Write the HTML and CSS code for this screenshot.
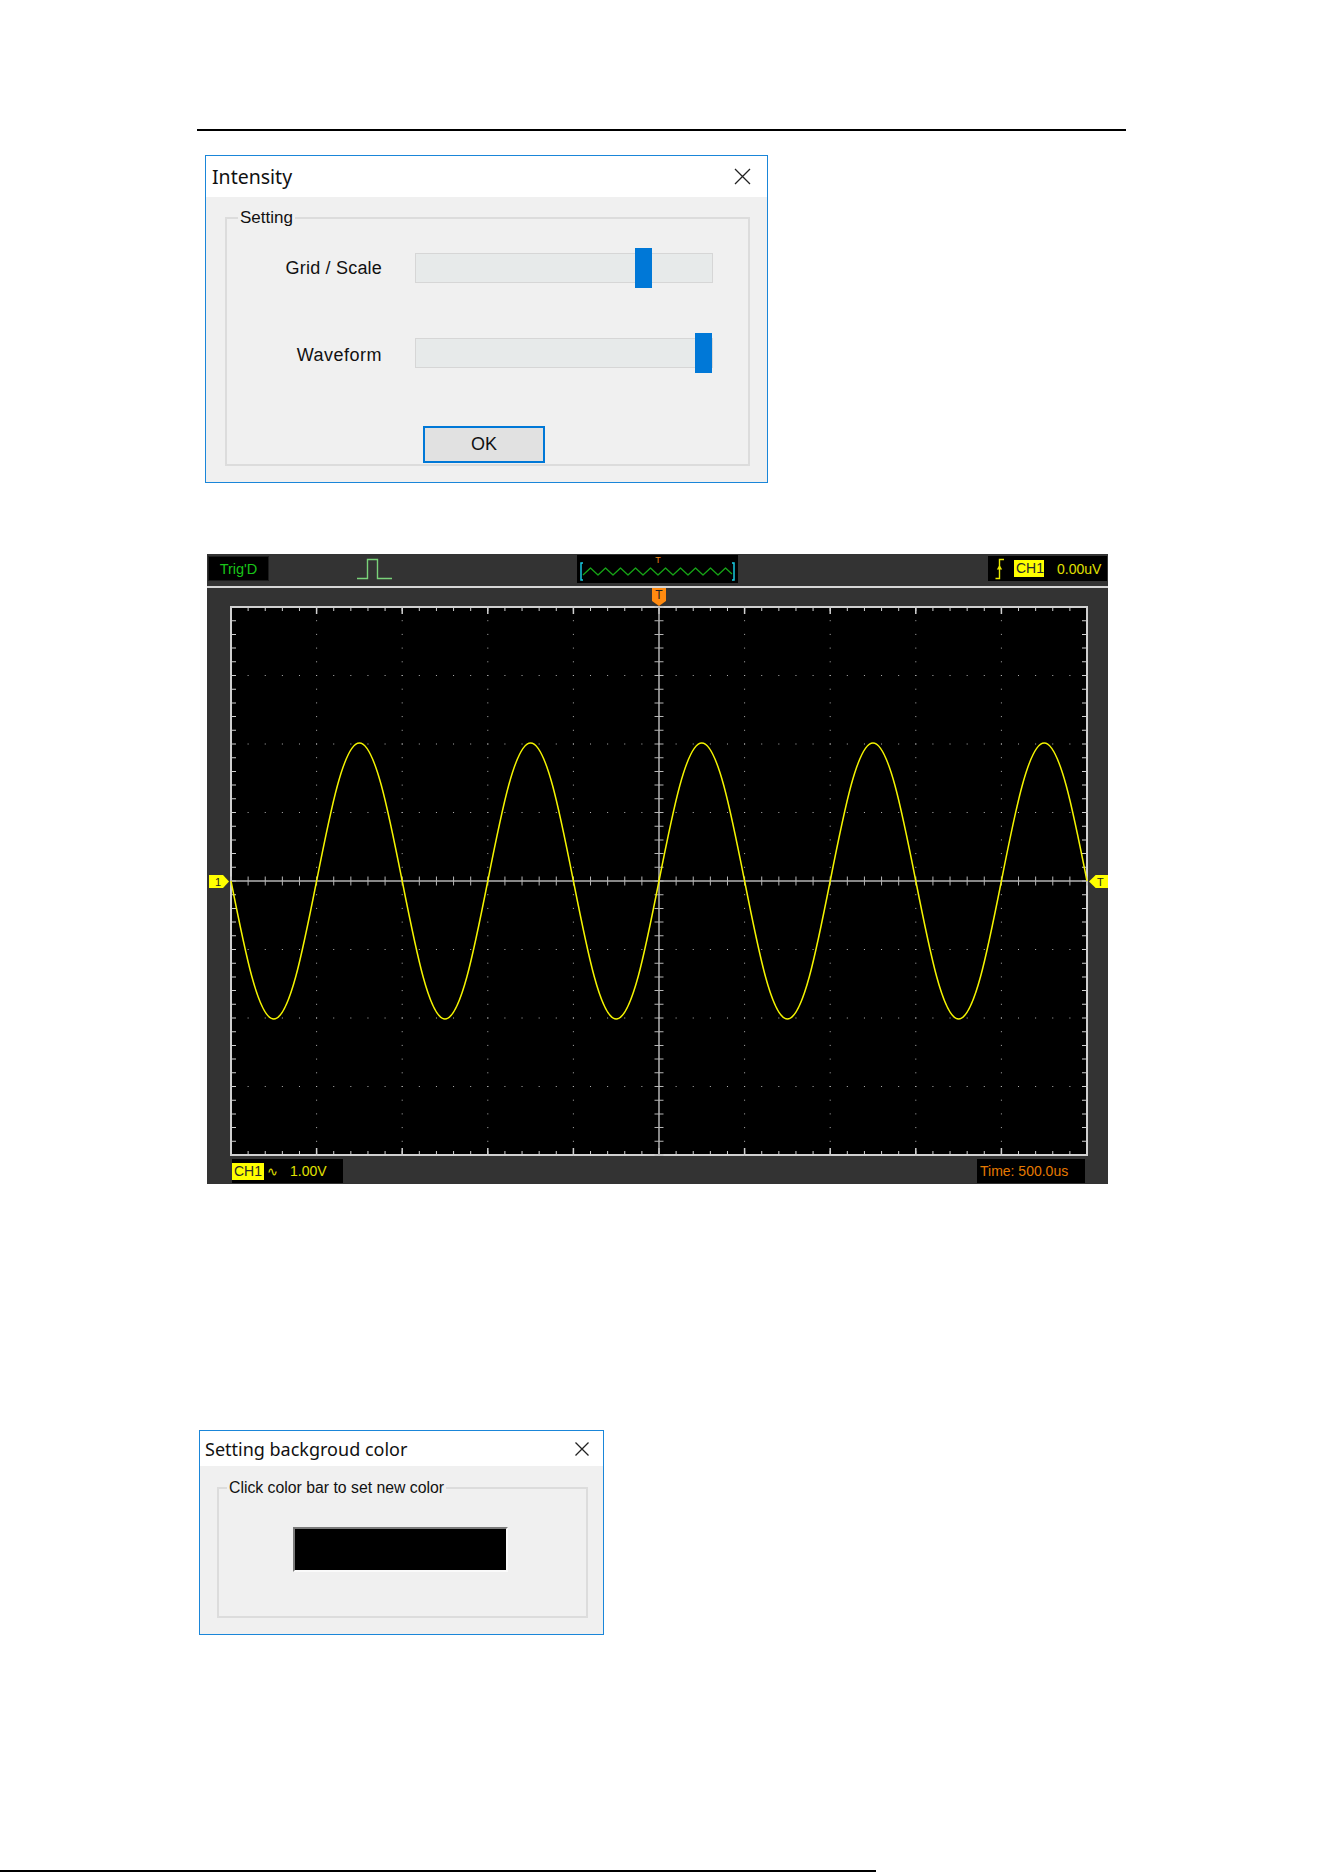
FILE: index.html
```html
<!DOCTYPE html>
<html lang="en">
<head>
<meta charset="utf-8">
<title>Display settings</title>
<link rel="stylesheet" href="styles.css">
</head>
<body>
<div class="page">
  <div class="rule rule-top"></div>

  <section class="dialog dialog-intensity">
    <div class="titlebar">
      <span class="title">Intensity</span>
      <svg class="close" width="17" height="17" viewBox="0 0 17 17"><path d="M1 1L16 16M16 1L1 16"/></svg>
    </div>
    <div class="dialog-body">
      <div class="group">
        <div class="legend">Setting</div>
        <div class="sliders">
          <span class="slider-label">Grid / Scale</span>
          <div class="track"><span class="thumb" style="left:219px"></span></div>
          <span class="slider-label label-low">Waveform</span>
          <div class="track"><span class="thumb" style="left:279px"></span></div>
        </div>
        <div class="actions"><button class="btn-ok" type="button">OK</button></div>
      </div>
    </div>
  </section>

  <section class="scope">
    <div class="scope-top">
      <div class="status">Trig'D</div>
      <svg class="pulse" width="36" height="22" viewBox="0 0 36 22">
        <path d="M0 20.5H10.5V1.5H20.5V20.5H35"/>
      </svg>
      <div class="memory">
        <svg width="161" height="28" viewBox="0 0 161 28">
          <path class="bracket" d="M6 8H4V25H6M155 8H157V25H155"/>
          <polyline class="zig" points="6,20 13.5,13 21,20 28.5,13 36,20 43.5,13 51,20 58.5,13 66,20 73.5,13 81,20 88.5,13 96,20 103.5,13 111,20 118.5,13 126,20 133.5,13 141,20 148.5,13 155,19"/>
          <text class="mem-t" x="81" y="8">T</text>
        </svg>
      </div>
      <div class="trigger">
        <svg class="edge" width="10" height="22" viewBox="0 0 10 22">
          <path d="M0.5 20.5H4.5V1.5H9"/>
          <path class="arrow" d="M1.8 11.5L4.5 7L7.2 11.5Z"/>
        </svg>
        <span class="ch-tag">CH1</span>
        <span class="trig-level">0.00uV</span>
      </div>
    </div>
    <div class="scope-sep"></div>
    <div class="screen">
      <svg class="graticule" width="858" height="550" viewBox="0 0 858 550">
        <rect x="1" y="1" width="856" height="548" fill="#000" stroke="#d0d0d0" stroke-width="2"/>
        <g class="dots-v">
          <line x1="86.6" y1="0.5" x2="86.6" y2="550"/>
          <line x1="172.2" y1="0.5" x2="172.2" y2="550"/>
          <line x1="257.8" y1="0.5" x2="257.8" y2="550"/>
          <line x1="343.4" y1="0.5" x2="343.4" y2="550"/>
          <line x1="514.6" y1="0.5" x2="514.6" y2="550"/>
          <line x1="600.2" y1="0.5" x2="600.2" y2="550"/>
          <line x1="685.8" y1="0.5" x2="685.8" y2="550"/>
          <line x1="771.4" y1="0.5" x2="771.4" y2="550"/>
        </g>
        <g class="dots-h">
          <line x1="0.5" y1="69.5" x2="858" y2="69.5"/>
          <line x1="0.5" y1="138" x2="858" y2="138"/>
          <line x1="0.5" y1="206.5" x2="858" y2="206.5"/>
          <line x1="0.5" y1="343.5" x2="858" y2="343.5"/>
          <line x1="0.5" y1="412" x2="858" y2="412"/>
          <line x1="0.5" y1="480.5" x2="858" y2="480.5"/>
        </g>
        <g class="ticks">
          <line class="tick-h" x1="0.5" y1="3" x2="858" y2="3" stroke-width="4"/>
          <line class="tick-h" x1="0.5" y1="547" x2="858" y2="547" stroke-width="4"/>
          <line class="tick-major" x1="0.25" y1="4.5" x2="858" y2="4.5" stroke-width="7"/>
          <line class="tick-major" x1="0.25" y1="545.5" x2="858" y2="545.5" stroke-width="7"/>
          <line class="tick-v" x1="3.5" y1="0.5" x2="3.5" y2="550" stroke-width="5"/>
          <line class="tick-v" x1="854.5" y1="0.5" x2="854.5" y2="550" stroke-width="5"/>
        </g>
        <g class="axis">
          <line x1="1" y1="275" x2="857" y2="275"/>
          <line x1="429" y1="1" x2="429" y2="549"/>
          <line class="tick-h" x1="0.5" y1="275" x2="858" y2="275" stroke-width="9"/>
          <line class="tick-v" x1="429" y1="0.5" x2="429" y2="550" stroke-width="9"/>
        </g>
        <path class="trace" d="M1 275c13.96 70.7 27.31 138 42.8 138s28.84 -67.3 42.8 -138s27.31 -138 42.8 -138s28.84 67.3 42.8 138s27.31 138 42.8 138s28.84 -67.3 42.8 -138s27.31 -138 42.8 -138s28.84 67.3 42.8 138s27.31 138 42.8 138s28.84 -67.3 42.8 -138s27.31 -138 42.8 -138s28.84 67.3 42.8 138s27.31 138 42.8 138s28.84 -67.3 42.8 -138s27.31 -138 42.8 -138s28.84 67.3 42.8 138s27.31 138 42.8 138s28.84 -67.3 42.8 -138s27.31 -138 42.8 -138s28.84 67.3 42.8 138"/>
      </svg>
    </div>
    <div class="scope-bottom">
      <div class="readout ch-readout"><span class="ch-tag">CH1</span><span class="coupling">∿</span><span class="volts">1.00V</span></div>
      <div class="readout time-readout">Time: 500.0us</div>
    </div>
    <span class="marker marker-t">T</span>
    <span class="marker marker-ch">1</span>
    <span class="marker marker-trig">T</span>
  </section>

  <section class="dialog dialog-bg">
    <div class="titlebar">
      <span class="title">Setting backgroud color</span>
      <svg class="close" width="14" height="14" viewBox="0 0 14 14"><path d="M0.5 0.5L13.5 13.5M13.5 0.5L0.5 13.5"/></svg>
    </div>
    <div class="dialog-body">
      <div class="group">
        <div class="legend">Click color bar to set new color</div>
        <div class="color-bar"></div>
      </div>
    </div>
  </section>

  <div class="rule rule-bottom"></div>
</div>
</body>
</html>
```

FILE: styles.css
```css
* { box-sizing: border-box; }

html, body {
  margin: 0;
  padding: 0;
  background: #fff;
}

body {
  height: 1872px;
  overflow: hidden;
  font-family: "Liberation Sans", Arial, sans-serif;
  color: #000;
}

.page {
  display: flex;
  flex-direction: column;
  align-items: flex-start;
}

/* page rules */
.rule { background: #000; height: 2px; }
.rule-top { margin: 129px 0 0 197px; width: 929px; }
.rule-bottom { margin: 235px 0 0 0; width: 876px; }

/* Windows-style dialogs */
.dialog {
  display: flex;
  flex-direction: column;
  background: #f0f0f0;
  border: 1px solid #1a86d9;
}

.titlebar {
  display: flex;
  align-items: center;
  justify-content: space-between;
  background: #fff;
}

.title {
  font-family: "Noto Sans", "Open Sans", sans-serif;
  color: #111;
}

.close path {
  fill: none;
  stroke: #222;
  stroke-width: 1.3;
}

.dialog-body {
  flex: 1;
  display: flex;
}

.group {
  flex: 1;
  border: 2px solid #dcdcdc;
}

.legend {
  width: fit-content;
  padding: 0 2px;
  background: #f0f0f0;
  color: #111;
}

/* Intensity dialog */
.dialog-intensity {
  margin: 24px 0 0 205px;
  width: 563px;
  height: 328px;
}
.dialog-intensity .titlebar { height: 41px; padding: 0 16px 0 6px; }
.dialog-intensity .title { font-size: 19.5px; }
.dialog-intensity .dialog-body { padding: 20px 17px 16px 19px; }
.dialog-intensity .legend {
  margin: -11px 0 0 11px;
  font-size: 17px;
  line-height: 20px;
}

.sliders {
  display: grid;
  grid-template-columns: 155px 298px;
  grid-auto-rows: 40px;
  column-gap: 33px;
  row-gap: 45px;
  align-items: center;
  margin-top: 20px;
}

.slider-label {
  text-align: right;
  font-size: 18px;
  letter-spacing: 0.2px;
  color: #111;
}
.label-low { padding-top: 5px; letter-spacing: 0.5px; }

.track {
  position: relative;
  height: 30px;
  background: #e7eaea;
  border: 1px solid #d6d6d6;
}

.thumb {
  position: absolute;
  top: -6px;
  width: 17px;
  height: 40px;
  background: #0078d7;
}

.actions { margin: 53px 0 0 196px; }

.btn-ok {
  display: block;
  width: 122px;
  height: 37px;
  margin: 0;
  padding: 0;
  background: #e1e1e1;
  border: 2px solid #0078d7;
  font-family: "Liberation Sans", Arial, sans-serif;
  font-size: 18px;
  color: #111;
}

/* oscilloscope display */
.scope {
  position: relative;
  margin: 71px 0 0 207px;
  width: 901px;
  height: 630px;
  background: #333;
  display: flex;
  flex-direction: column;
  font-family: "Liberation Sans", Arial, sans-serif;
  font-size: 14px;
}

.scope-top {
  display: flex;
  align-items: flex-start;
  height: 32px;
  padding-top: 2px;
}

.status {
  margin-left: 1px;
  width: 61px;
  height: 25px;
  background: #000;
  border: 1px solid #1c1c1c;
  color: #19c419;
  font-size: 14.5px;
  display: flex;
  align-items: center;
  justify-content: center;
}

.pulse { margin: 2px 0 0 88px; }
.pulse path {
  fill: none;
  stroke: #7ad27a;
  stroke-width: 1.4;
}

.memory {
  margin: -1px 0 0 184px;
  width: 161px;
  height: 28px;
  background: #000;
}
.memory svg { display: block; }
.bracket { fill: none; stroke: #18c8e0; stroke-width: 1.5; }
.zig { fill: none; stroke: #16a316; stroke-width: 1.3; stroke-linejoin: round; }
.mem-t {
  fill: #f08a1a;
  font-family: "Liberation Sans", Arial, sans-serif;
  font-size: 9px;
  text-anchor: middle;
}

.trigger {
  margin-left: auto;
  margin-right: 1px;
  width: 119px;
  height: 25px;
  background: #000;
  display: flex;
  align-items: center;
  padding-left: 7px;
}
.edge path { fill: none; stroke: #e8e800; stroke-width: 1.4; }
.edge .arrow { fill: #e8e800; stroke: none; }

.ch-tag {
  background: #ffff00;
  color: #2a2a2a;
  height: 17px;
  line-height: 17px;
  padding: 0 2px;
}
.trigger .ch-tag { margin-left: 9px; width: 30px; }
.trig-level { margin-left: 13px; color: #e0e000; }

.scope-sep {
  height: 2px;
  background: #d6d6d6;
}

.screen {
  height: 568px;
  padding: 18px 0 0 23px;
}
.graticule { display: block; }

.dots-v line { stroke: #b0b0b0; stroke-width: 1; stroke-dasharray: 1 12.7; }
.dots-h line { stroke: #b0b0b0; stroke-width: 1; stroke-dasharray: 1 16.12; }
.ticks line { stroke: #d0d0d0; }
.tick-h { stroke-dasharray: 1 16.12; }
.tick-v { stroke-dasharray: 1 12.7; }
.tick-major { stroke-dasharray: 1.5 84.1; }
.axis line { stroke: #b4b4b4; stroke-width: 1.5; }
.axis .tick-h, .axis .tick-v { stroke-width: 9px; stroke: #b4b4b4; }

.trace {
  fill: none;
  stroke: #f4f400;
  stroke-width: 1.5;
}

.scope-bottom {
  display: flex;
  justify-content: space-between;
  align-items: flex-start;
  height: 28px;
  padding: 3px 23px 0 25px;
}

.readout {
  height: 24px;
  background: #000;
  display: flex;
  align-items: center;
}
.ch-readout { width: 111px; }
.ch-readout .ch-tag { width: 32px; }
.coupling { color: #e0e000; margin-left: 3px; font-size: 13px; }
.volts { color: #e0e000; margin-left: 12px; }
.time-readout {
  width: 108px;
  color: #e67a00;
  padding-left: 3px;
}

/* level / trigger markers on the screen edges */
.marker {
  position: absolute;
  display: flex;
  align-items: center;
  font-size: 11px;
  color: #222;
}
.marker-t {
  left: 445px;
  top: 34px;
  width: 14px;
  height: 18px;
  background: #ff8a10;
  justify-content: center;
  align-items: flex-start;
  font-size: 12px;
  line-height: 14px;
  clip-path: polygon(0 0, 100% 0, 100% 72%, 50% 100%, 0 72%);
}
.marker-ch {
  left: 2px;
  top: 321px;
  width: 20px;
  height: 13px;
  background: #ffff00;
  padding-left: 6px;
  clip-path: polygon(0 0, 70% 0, 100% 50%, 70% 100%, 0 100%);
}
.marker-trig {
  left: 882px;
  top: 321px;
  width: 19px;
  height: 13px;
  background: #ffff00;
  padding-left: 8px;
  clip-path: polygon(35% 0, 100% 0, 100% 100%, 35% 100%, 0 50%);
}

/* background colour dialog */
.dialog-bg {
  margin: 246px 0 0 199px;
  width: 405px;
  height: 205px;
}
.dialog-bg .titlebar { height: 35px; padding: 0 14px 0 5px; }
.dialog-bg .title { font-size: 18px; }
.dialog-bg .dialog-body { padding: 21px 15px 16px 17px; }
.dialog-bg .legend {
  margin: -10px 0 0 8px;
  font-size: 15.8px;
  line-height: 18px;
}

.color-bar {
  margin: 30px 0 0 74px;
  width: 215px;
  height: 45px;
  background: #000;
  border: 2px solid;
  border-color: #7a7a7a #fafafa #fafafa #7a7a7a;
}
```
